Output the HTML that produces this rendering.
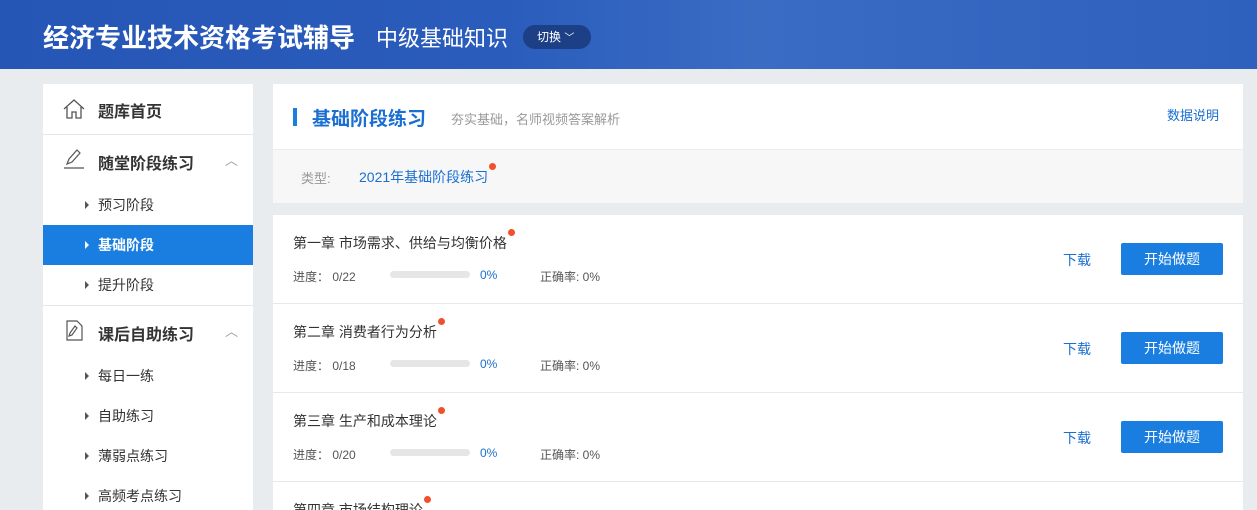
<!DOCTYPE html>
<html><head><meta charset="utf-8"><style>
*{margin:0;padding:0;box-sizing:border-box}
html,body{width:1257px;height:510px;overflow:hidden}
body{background:#e9ecef;font-family:"Liberation Sans","Noto Sans CJK SC",sans-serif;position:relative}
.hd{position:absolute;left:0;top:0;width:1257px;height:69px;background:linear-gradient(90deg,#2656b5 0%,#2a5cbc 40%,#3a6cc4 60%,#2e60bd 100%)}
.t1{position:absolute;left:43px;top:18px;color:#fff;font-size:26px;font-weight:bold}
.t2{position:absolute;left:376px;top:21px;color:#fff;font-size:22px}
.sw{position:absolute;left:523px;top:25px;width:68px;height:24px;border-radius:12px;background:#1c3f86;color:#fff;font-size:12px;line-height:24px;padding-left:14px}
.sb{position:absolute;left:43px;top:84px;width:210px;height:426px;background:#fff;overflow:hidden}
.it{position:absolute;left:0;width:210px;font-size:16px;font-weight:bold;color:#333}
.sub{position:absolute;left:0;width:210px;height:40px;line-height:40px;font-size:14px;color:#333;padding-left:55px}
.sub:before{content:"";position:absolute;left:42px;top:16px;border-left:4px solid #555;border-top:4px solid transparent;border-bottom:4px solid transparent}
.sub.on{background:#1a7ee0;color:#fff;font-weight:bold}
.sub.on:before{border-left-color:#fff}
.line{position:absolute;left:0;width:210px;height:1px;background:#e6e6e6}
.p1{position:absolute;left:273px;top:84px;width:970px;height:119px;background:#fff}
.p2{position:absolute;left:273px;top:215px;width:970px;height:295px;background:#fff;overflow:hidden}
.row{position:absolute;left:0;width:970px;height:89px;border-bottom:1px solid #e8e8e8}
.ct{position:absolute;left:20px;top:18px;font-size:14px;color:#333}
.dot{display:inline-block;width:7px;height:7px;border-radius:50%;background:#f0502c;position:relative;top:-12px;left:1px}
.pg{position:absolute;top:53px;font-size:12px;color:#555}
.bar{position:absolute;left:117px;top:56px;width:80px;height:7px;border-radius:4px;background:#e6e6e6}
.dl{position:absolute;left:790px;top:35px;font-size:14px;color:#1a6fd0}
.bt{position:absolute;left:848px;top:28px;width:102px;height:32px;background:#1a7ee0;color:#fff;font-size:14px;text-align:center;line-height:32px;border-radius:2px}
</style></head><body>
<div class="hd"></div>
<div class="t1">经济专业技术资格考试辅导</div>
<div class="t2">中级基础知识</div>
<div class="sw">切换 <span style="font-size:10px">﹀</span></div>

<div class="sb">
 <div class="it" style="top:14px;padding-left:55px">题库首页</div>
 <svg style="position:absolute;left:20px;top:15px" width="22" height="20" viewBox="0 0 22 20" fill="none" stroke="#555" stroke-width="1.3"><path d="M1 10L11 1l10 9M4 8v11h5v-6h4v6h5V8"/></svg>
 <div class="line" style="top:50px"></div>
 <div class="it" style="top:66px;padding-left:55px">随堂阶段练习</div>
 <svg style="position:absolute;left:20px;top:64px" width="22" height="22" viewBox="0 0 22 22" fill="none" stroke="#555" stroke-width="1.2"><path d="M4 16l2-5 8-9 3 3-8 9zM1 20h20"/></svg>
 <span style="position:absolute;left:182px;top:66px;color:#999;font-size:13px">︿</span>
 <div class="sub" style="top:101px">预习阶段</div>
 <div class="sub on" style="top:141px">基础阶段</div>
 <div class="sub" style="top:181px">提升阶段</div>
 <div class="line" style="top:221px"></div>
 <div class="it" style="top:237px;padding-left:55px">课后自助练习</div>
 <svg style="position:absolute;left:20px;top:235px" width="22" height="22" viewBox="0 0 22 22" fill="none" stroke="#555" stroke-width="1.2"><path d="M4 2h10l5 5v14H4zM7 14l5-7 2 2-5 7-3 1z"/></svg>
 <span style="position:absolute;left:182px;top:237px;color:#999;font-size:13px">︿</span>
 <div class="sub" style="top:272px">每日一练</div>
 <div class="sub" style="top:312px">自助练习</div>
 <div class="sub" style="top:352px">薄弱点练习</div>
 <div class="sub" style="top:392px;height:34px">高频考点练习</div>
</div>

<div class="p1">
 <div style="position:absolute;left:20px;top:24px;width:4px;height:18px;background:#1a7ee0"></div>
 <div style="position:absolute;left:39px;top:20px;font-size:19px;font-weight:bold;color:#1a6fd0">基础阶段练习</div>
 <div style="position:absolute;left:178px;top:25px;font-size:13px;color:#999">夯实基础，名师视频答案解析</div>
 <div style="position:absolute;left:894px;top:21px;font-size:13px;color:#1a6fd0">数据说明</div>
 <div style="position:absolute;left:0;top:65px;width:970px;height:54px;background:#f7f7f7;border-top:1px solid #ececec"></div>
 <div style="position:absolute;left:28px;top:84px;font-size:13px;color:#999">类型:</div>
 <div style="position:absolute;left:86px;top:83px;font-size:14px;color:#1a6fd0">2021年基础阶段练习<span class="dot"></span></div>
</div>

<div class="p2">
 <div class="row" style="top:0"><div class="ct">第一章 市场需求、供给与均衡价格<span class="dot"></span></div><div class="pg" style="left:20px">进度： 0/22</div><div class="bar"></div><div class="pg" style="left:207px;color:#1a6fd0">0%</div><div class="pg" style="left:267px">正确率: 0%</div><div class="dl">下载</div><div class="bt">开始做题</div></div>
 <div class="row" style="top:89px"><div class="ct">第二章 消费者行为分析<span class="dot"></span></div><div class="pg" style="left:20px">进度： 0/18</div><div class="bar"></div><div class="pg" style="left:207px;color:#1a6fd0">0%</div><div class="pg" style="left:267px">正确率: 0%</div><div class="dl">下载</div><div class="bt">开始做题</div></div>
 <div class="row" style="top:178px"><div class="ct">第三章 生产和成本理论<span class="dot"></span></div><div class="pg" style="left:20px">进度： 0/20</div><div class="bar"></div><div class="pg" style="left:207px;color:#1a6fd0">0%</div><div class="pg" style="left:267px">正确率: 0%</div><div class="dl">下载</div><div class="bt">开始做题</div></div>
 <div class="row" style="top:267px;height:28px;border-bottom:none"><div class="ct">第四章 市场结构理论<span class="dot"></span></div></div>
</div>
</body></html>
